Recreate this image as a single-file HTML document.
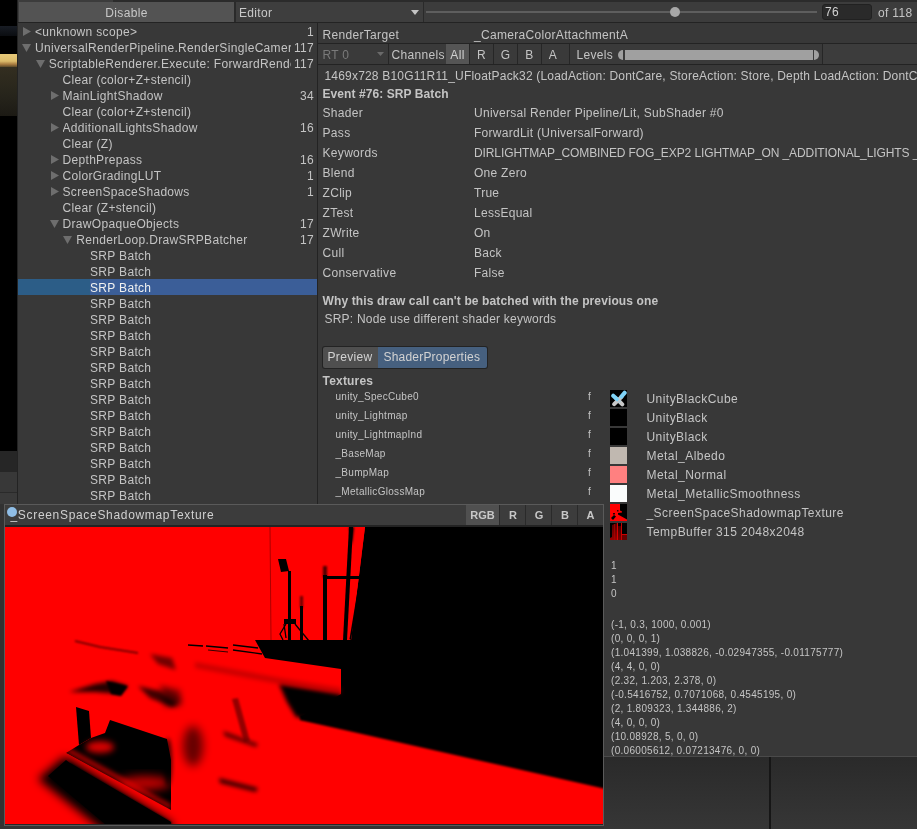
<!DOCTYPE html>
<html><head><meta charset="utf-8"><style>
*{box-sizing:border-box;margin:0;padding:0}
html,body{width:917px;height:829px;overflow:hidden;background:#2e2e2e}
body{position:relative;font-family:"Liberation Sans",sans-serif;font-size:12px;color:#c4c4c4;letter-spacing:0.32px}
.a{position:absolute}
.t{position:absolute;white-space:pre;line-height:16px}
.s{position:absolute;white-space:pre;line-height:14px;font-size:10px;letter-spacing:0.3px}
</style></head><body>
<div style="position:absolute;left:0;top:0;width:917px;height:829px;will-change:transform;overflow:hidden">
<div class="a" style="left:0px;top:0px;width:17px;height:504px;background:#000;"></div>
<div class="a" style="left:0px;top:26px;width:17px;height:10px;background:linear-gradient(#181c24,#0b0d11);"></div>
<div class="a" style="left:0px;top:54px;width:17px;height:13px;background:linear-gradient(#e6c878 0%,#dcbb6a 55%,#a5793e 80%,#5a4a2a 100%);"></div>
<div class="a" style="left:0px;top:67px;width:17px;height:49px;background:linear-gradient(#332e20,#26241b 60%,#1c1a14);"></div>
<div class="a" style="left:0px;top:451px;width:17px;height:21px;background:#262626;"></div>
<div class="a" style="left:0px;top:472px;width:17px;height:20px;background:#383838;"></div>
<div class="a" style="left:0px;top:492px;width:17px;height:1px;background:#2a2a2a;"></div>
<div class="a" style="left:0px;top:493px;width:17px;height:40px;background:#3a3a3a;"></div>
<div class="a" style="left:0px;top:504px;width:4px;height:325px;background:#323232;"></div>
<div class="a" style="left:17px;top:0px;width:300px;height:829px;background:#383838;border-left:1px solid #232323"></div>
<div class="a" style="left:18px;top:0px;width:899px;height:22px;background:#3c3c3c;"></div>
<div class="a" style="left:113px;top:0px;width:804px;height:2px;background:#2b2b2b;"></div>
<div class="a" style="left:18px;top:22px;width:899px;height:1px;background:#232323;"></div>
<div class="a" style="left:19px;top:2px;width:215px;height:20px;background:#535353;"></div>
<div class="t" style="left:19px;top:5px;width:215px;text-align:center;color:#c8c8c8">Disable</div>
<div class="a" style="left:234px;top:2px;width:2px;height:20px;background:#2a2a2a;"></div>
<div class="a" style="left:236px;top:2px;width:187px;height:20px;background:#3e3e3e;"></div>
<div class="t" style="left:239px;top:5px;color:#c8c8c8">Editor</div>
<svg class="a" style="left:411px;top:10px" width="8" height="5"><polygon points="0,0 8,0 4,5" fill="#c4c4c4"/></svg>
<div class="a" style="left:423px;top:2px;width:1px;height:20px;background:#2a2a2a;"></div>
<div class="a" style="left:426px;top:11px;width:391px;height:2px;background:#5e5e5e;"></div>
<div class="a" style="left:670px;top:7px;width:10px;height:10px;background:#a8a8a8;border-radius:50%"></div>
<div class="a" style="left:822px;top:4px;width:50px;height:16px;background:#2a2a2a;border:1px solid #212121;border-radius:3px"></div>
<div class="t" style="left:825px;top:4px;color:#d2d2d2">76</div>
<div class="t" style="left:878px;top:5px;">of 118</div>
<svg class="a" style="left:23.0px;top:27px" width="8" height="9"><polygon points="0,0 8,4.5 0,9" fill="#6e6e6e"/></svg>
<div class="t" style="left:35.0px;top:24px;width:256.0px;overflow:hidden">&lt;unknown scope&gt;</div>
<div class="t" style="left:280px;top:24px;width:34px;text-align:right">1</div>
<svg class="a" style="left:22.0px;top:44px" width="9" height="8"><polygon points="0,0 9,0 4.5,8" fill="#6e6e6e"/></svg>
<div class="t" style="left:35.0px;top:40px;width:256.0px;overflow:hidden">UniversalRenderPipeline.RenderSingleCamera</div>
<div class="t" style="left:280px;top:40px;width:34px;text-align:right">117</div>
<svg class="a" style="left:35.75px;top:60px" width="9" height="8"><polygon points="0,0 9,0 4.5,8" fill="#6e6e6e"/></svg>
<div class="t" style="left:48.75px;top:56px;width:242.25px;overflow:hidden">ScriptableRenderer.Execute: ForwardRenderer</div>
<div class="t" style="left:280px;top:56px;width:34px;text-align:right">117</div>
<div class="t" style="left:62.5px;top:72px;width:228.5px;overflow:hidden">Clear (color+Z+stencil)</div>
<svg class="a" style="left:50.5px;top:91px" width="8" height="9"><polygon points="0,0 8,4.5 0,9" fill="#6e6e6e"/></svg>
<div class="t" style="left:62.5px;top:88px;width:228.5px;overflow:hidden">MainLightShadow</div>
<div class="t" style="left:280px;top:88px;width:34px;text-align:right">34</div>
<div class="t" style="left:62.5px;top:104px;width:228.5px;overflow:hidden">Clear (color+Z+stencil)</div>
<svg class="a" style="left:50.5px;top:123px" width="8" height="9"><polygon points="0,0 8,4.5 0,9" fill="#6e6e6e"/></svg>
<div class="t" style="left:62.5px;top:120px;width:228.5px;overflow:hidden">AdditionalLightsShadow</div>
<div class="t" style="left:280px;top:120px;width:34px;text-align:right">16</div>
<div class="t" style="left:62.5px;top:136px;width:228.5px;overflow:hidden">Clear (Z)</div>
<svg class="a" style="left:50.5px;top:155px" width="8" height="9"><polygon points="0,0 8,4.5 0,9" fill="#6e6e6e"/></svg>
<div class="t" style="left:62.5px;top:152px;width:228.5px;overflow:hidden">DepthPrepass</div>
<div class="t" style="left:280px;top:152px;width:34px;text-align:right">16</div>
<svg class="a" style="left:50.5px;top:171px" width="8" height="9"><polygon points="0,0 8,4.5 0,9" fill="#6e6e6e"/></svg>
<div class="t" style="left:62.5px;top:168px;width:228.5px;overflow:hidden">ColorGradingLUT</div>
<div class="t" style="left:280px;top:168px;width:34px;text-align:right">1</div>
<svg class="a" style="left:50.5px;top:187px" width="8" height="9"><polygon points="0,0 8,4.5 0,9" fill="#6e6e6e"/></svg>
<div class="t" style="left:62.5px;top:184px;width:228.5px;overflow:hidden">ScreenSpaceShadows</div>
<div class="t" style="left:280px;top:184px;width:34px;text-align:right">1</div>
<div class="t" style="left:62.5px;top:200px;width:228.5px;overflow:hidden">Clear (Z+stencil)</div>
<svg class="a" style="left:49.5px;top:220px" width="9" height="8"><polygon points="0,0 9,0 4.5,8" fill="#6e6e6e"/></svg>
<div class="t" style="left:62.5px;top:216px;width:228.5px;overflow:hidden">DrawOpaqueObjects</div>
<div class="t" style="left:280px;top:216px;width:34px;text-align:right">17</div>
<svg class="a" style="left:63.25px;top:236px" width="9" height="8"><polygon points="0,0 9,0 4.5,8" fill="#6e6e6e"/></svg>
<div class="t" style="left:76.25px;top:232px;width:214.75px;overflow:hidden">RenderLoop.DrawSRPBatcher</div>
<div class="t" style="left:280px;top:232px;width:34px;text-align:right">17</div>
<div class="t" style="left:90.0px;top:248px;width:201.0px;overflow:hidden">SRP Batch</div>
<div class="t" style="left:90.0px;top:264px;width:201.0px;overflow:hidden">SRP Batch</div>
<div class="a" style="left:18px;top:279px;width:72px;height:16px;background:#2c5d87;"></div>
<div class="a" style="left:90px;top:279px;width:227px;height:16px;background:#3b5e98;"></div>
<div class="t" style="left:90.0px;top:280px;width:201.0px;overflow:hidden;color:#f0f0f0">SRP Batch</div>
<div class="t" style="left:90.0px;top:296px;width:201.0px;overflow:hidden">SRP Batch</div>
<div class="t" style="left:90.0px;top:312px;width:201.0px;overflow:hidden">SRP Batch</div>
<div class="t" style="left:90.0px;top:328px;width:201.0px;overflow:hidden">SRP Batch</div>
<div class="t" style="left:90.0px;top:344px;width:201.0px;overflow:hidden">SRP Batch</div>
<div class="t" style="left:90.0px;top:360px;width:201.0px;overflow:hidden">SRP Batch</div>
<div class="t" style="left:90.0px;top:376px;width:201.0px;overflow:hidden">SRP Batch</div>
<div class="t" style="left:90.0px;top:392px;width:201.0px;overflow:hidden">SRP Batch</div>
<div class="t" style="left:90.0px;top:408px;width:201.0px;overflow:hidden">SRP Batch</div>
<div class="t" style="left:90.0px;top:424px;width:201.0px;overflow:hidden">SRP Batch</div>
<div class="t" style="left:90.0px;top:440px;width:201.0px;overflow:hidden">SRP Batch</div>
<div class="t" style="left:90.0px;top:456px;width:201.0px;overflow:hidden">SRP Batch</div>
<div class="t" style="left:90.0px;top:472px;width:201.0px;overflow:hidden">SRP Batch</div>
<div class="t" style="left:90.0px;top:488px;width:201.0px;overflow:hidden">SRP Batch</div>
<div class="a" style="left:317px;top:23px;width:600px;height:734px;background:#383838;border-left:1px solid #232323"></div>
<div class="t" style="left:322.5px;top:27px;">RenderTarget</div>
<div class="t" style="left:474px;top:27px;">_CameraColorAttachmentA</div>
<div class="a" style="left:318px;top:43px;width:599px;height:1px;background:#232323;"></div>
<div class="a" style="left:318px;top:44px;width:599px;height:20px;background:#3a3a3a;"></div>
<div class="t" style="left:322.5px;top:47px;color:#7a7a7a">RT 0</div>
<svg class="a" style="left:377px;top:52px" width="7" height="4"><polygon points="0,0 7,0 3.5,4" fill="#6a6a6a"/></svg>
<div class="a" style="left:388px;top:44px;width:1px;height:20px;background:#262626;"></div>
<div class="t" style="left:391.5px;top:47px;">Channels</div>
<div class="a" style="left:446px;top:44px;width:23px;height:20px;background:#555555;"></div>
<div class="t" style="left:446px;top:47px;width:23px;text-align:center;color:#d0d0d0">All</div>
<div class="a" style="left:469px;top:44px;width:1px;height:20px;background:#262626;"></div>
<div class="a" style="left:493px;top:44px;width:1px;height:20px;background:#262626;"></div>
<div class="a" style="left:517px;top:44px;width:1px;height:20px;background:#262626;"></div>
<div class="a" style="left:541px;top:44px;width:1px;height:20px;background:#262626;"></div>
<div class="t" style="left:470px;top:47px;width:23px;text-align:center">R</div>
<div class="t" style="left:494px;top:47px;width:23px;text-align:center">G</div>
<div class="t" style="left:518px;top:47px;width:23px;text-align:center">B</div>
<div class="t" style="left:542px;top:47px;width:22px;text-align:center">A</div>
<div class="a" style="left:569px;top:44px;width:1px;height:20px;background:#262626;"></div>
<div class="t" style="left:576.5px;top:47px;">Levels</div>
<svg class="a" style="left:617px;top:50px" width="204" height="10"><path d="M6,0 L6,10 A5,5 0 0 1 6,0 Z" fill="#a0a0a0"/><rect x="8" y="0" width="188" height="10" fill="#a0a0a0"/><path d="M197,0 A5,5 0 0 1 197,10 Z" fill="#a0a0a0"/></svg>
<div class="a" style="left:822px;top:44px;width:1px;height:20px;background:#262626;"></div>
<div class="a" style="left:823px;top:44px;width:94px;height:20px;background:#3c3c3c;"></div>
<div class="a" style="left:318px;top:64px;width:599px;height:1px;background:#232323;"></div>
<div class="t" style="left:324.5px;top:68px;letter-spacing:0.19px">1469x728 B10G11R11_UFloatPack32 (LoadAction: DontCare, StoreAction: Store, Depth LoadAction: DontCare, StoreAction: DontCare)</div>
<div class="t" style="left:322.5px;top:86px;font-weight:bold;letter-spacing:0.08px">Event #76: SRP Batch</div>
<div class="t" style="left:322.5px;top:105px;">Shader</div>
<div class="t" style="left:474px;top:105px;letter-spacing:0.27px">Universal Render Pipeline/Lit, SubShader #0</div>
<div class="t" style="left:322.5px;top:125px;">Pass</div>
<div class="t" style="left:474px;top:125px;letter-spacing:0.27px">ForwardLit (UniversalForward)</div>
<div class="t" style="left:322.5px;top:145px;">Keywords</div>
<div class="t" style="left:474px;top:145px;letter-spacing:-0.1px">DIRLIGHTMAP_COMBINED FOG_EXP2 LIGHTMAP_ON _ADDITIONAL_LIGHTS _MAIN_LIGHT_SHADOWS</div>
<div class="t" style="left:322.5px;top:165px;">Blend</div>
<div class="t" style="left:474px;top:165px;letter-spacing:0.27px">One Zero</div>
<div class="t" style="left:322.5px;top:185px;">ZClip</div>
<div class="t" style="left:474px;top:185px;letter-spacing:0.27px">True</div>
<div class="t" style="left:322.5px;top:205px;">ZTest</div>
<div class="t" style="left:474px;top:205px;letter-spacing:0.27px">LessEqual</div>
<div class="t" style="left:322.5px;top:225px;">ZWrite</div>
<div class="t" style="left:474px;top:225px;letter-spacing:0.27px">On</div>
<div class="t" style="left:322.5px;top:245px;">Cull</div>
<div class="t" style="left:474px;top:245px;letter-spacing:0.27px">Back</div>
<div class="t" style="left:322.5px;top:265px;">Conservative</div>
<div class="t" style="left:474px;top:265px;letter-spacing:0.27px">False</div>
<div class="t" style="left:322.5px;top:292.5px;font-weight:bold;letter-spacing:0.12px">Why this draw call can&#x27;t be batched with the previous one</div>
<div class="t" style="left:324.5px;top:311px;letter-spacing:0.22px">SRP: Node use different shader keywords</div>
<div class="a" style="left:321.5px;top:345.5px;width:166px;height:23px;background:#232323;border-radius:3px"></div>
<div class="a" style="left:322.5px;top:346.5px;width:55px;height:21px;background:#4f4f4f;border-radius:2px 0 0 2px"></div>
<div class="a" style="left:377.5px;top:346.5px;width:109px;height:21px;background:#46607f;border-radius:0 2px 2px 0"></div>
<div class="t" style="left:327.5px;top:349px;color:#d2d2d2">Preview</div>
<div class="t" style="left:383.5px;top:349px;color:#d2d2d2;letter-spacing:0.2px">ShaderProperties</div>
<div class="t" style="left:322.5px;top:372.5px;font-weight:bold;letter-spacing:0.2px">Textures</div>
<div class="s" style="left:335.5px;top:390px;">unity_SpecCube0</div>
<div class="s" style="left:588px;top:390px;">f</div>
<div class="t" style="left:646.5px;top:390.5px;letter-spacing:0.45px">UnityBlackCube</div>
<div class="s" style="left:335.5px;top:409px;">unity_Lightmap</div>
<div class="s" style="left:588px;top:409px;">f</div>
<div class="t" style="left:646.5px;top:409.5px;letter-spacing:0.45px">UnityBlack</div>
<div class="s" style="left:335.5px;top:428px;">unity_LightmapInd</div>
<div class="s" style="left:588px;top:428px;">f</div>
<div class="t" style="left:646.5px;top:428.5px;letter-spacing:0.45px">UnityBlack</div>
<div class="s" style="left:335.5px;top:447px;">_BaseMap</div>
<div class="s" style="left:588px;top:447px;">f</div>
<div class="t" style="left:646.5px;top:447.5px;letter-spacing:0.45px">Metal_Albedo</div>
<div class="s" style="left:335.5px;top:466px;">_BumpMap</div>
<div class="s" style="left:588px;top:466px;">f</div>
<div class="t" style="left:646.5px;top:466.5px;letter-spacing:0.45px">Metal_Normal</div>
<div class="s" style="left:335.5px;top:485px;">_MetallicGlossMap</div>
<div class="s" style="left:588px;top:485px;">f</div>
<div class="t" style="left:646.5px;top:485.5px;letter-spacing:0.45px">Metal_MetallicSmoothness</div>
<div class="s" style="left:335.5px;top:504px;">_ScreenSpaceShadowmapTexture</div>
<div class="s" style="left:588px;top:504px;">f</div>
<div class="t" style="left:646.5px;top:504.5px;letter-spacing:0.45px">_ScreenSpaceShadowmapTexture</div>
<div class="s" style="left:335.5px;top:523px;">_TempBuffer</div>
<div class="s" style="left:588px;top:523px;">f</div>
<div class="t" style="left:646.5px;top:523.5px;letter-spacing:0.45px">TempBuffer 315 2048x2048</div>
<svg class="a" style="left:610px;top:390px" width="17" height="17"><rect width="17" height="17" fill="#000"/><line x1="9" y1="11" x2="12.3" y2="14.3" stroke="#c8c8c8" stroke-width="4" stroke-linecap="round"/><line x1="3.2" y1="5.8" x2="8.5" y2="10.5" stroke="#7fd3f7" stroke-width="4.2" stroke-linecap="round"/><line x1="4.2" y1="14.2" x2="11.5" y2="6.8" stroke="#c8c8c8" stroke-width="4" stroke-linecap="round"/><line x1="11.5" y1="6.5" x2="14.6" y2="2.8" stroke="#7fd3f7" stroke-width="4.2" stroke-linecap="round"/><line x1="5" y1="7.5" x2="8.3" y2="10.5" stroke="#7fd3f7" stroke-width="3.5" stroke-linecap="butt"/></svg>
<div class="a" style="left:610px;top:409px;width:17px;height:17px;background:#000;"></div>
<div class="a" style="left:610px;top:428px;width:17px;height:17px;background:#000;"></div>
<div class="a" style="left:610px;top:447px;width:17px;height:17px;background:#c0b8b0;"></div>
<div class="a" style="left:610px;top:466px;width:17px;height:17px;background:#ff8080;"></div>
<div class="a" style="left:610px;top:485px;width:17px;height:17px;background:#fafcfc;"></div>
<svg class="a" style="left:610px;top:504px" width="17" height="17"><rect width="17" height="17" fill="#f00"/><polygon points="10,0 17,0 17,15.5 8,10.5 8,9 12,8.5 12,7.5 10,6.5" fill="#000"/><polygon points="1,14 4,11 6,12.5 3,16" fill="#000"/><rect x="3" y="9" width="2" height="1.5" fill="#200"/><rect x="7" y="6" width="1.5" height="1.5" fill="#300"/></svg>
<svg class="a" style="left:610px;top:523px" width="17" height="17"><defs><linearGradient id="tg" x1="0" y1="0" x2="0" y2="1"><stop offset="0" stop-color="#500"/><stop offset="1" stop-color="#900"/></linearGradient></defs><rect width="17" height="17" fill="#000"/><polygon points="2,2 7,0 7,17 0,17 0,15 2,14" fill="url(#tg)"/><rect x="8" y="3" width="3" height="14" fill="url(#tg)" opacity="0.8"/><rect x="11" y="12" width="6" height="5" fill="#600"/><rect x="7" y="0" width="1" height="17" fill="#d00"/><rect x="11" y="0" width="1" height="17" fill="#c00"/><rect x="11" y="11" width="6" height="1" fill="#c00"/><rect x="4" y="1" width="0.8" height="16" fill="#a00"/></svg>
<div class="s" style="left:611px;top:559px;">1</div>
<div class="s" style="left:611px;top:573px;">1</div>
<div class="s" style="left:611px;top:587px;">0</div>
<div class="s" style="left:611px;top:618px;">(-1, 0.3, 1000, 0.001)</div>
<div class="s" style="left:611px;top:632px;">(0, 0, 0, 1)</div>
<div class="s" style="left:611px;top:646px;">(1.041399, 1.038826, -0.02947355, -0.01175777)</div>
<div class="s" style="left:611px;top:660px;">(4, 4, 0, 0)</div>
<div class="s" style="left:611px;top:674px;">(2.32, 1.203, 2.378, 0)</div>
<div class="s" style="left:611px;top:688px;">(-0.5416752, 0.7071068, 0.4545195, 0)</div>
<div class="s" style="left:611px;top:702px;">(2, 1.809323, 1.344886, 2)</div>
<div class="s" style="left:611px;top:716px;">(4, 0, 0, 0)</div>
<div class="s" style="left:611px;top:730px;">(10.08928, 5, 0, 0)</div>
<div class="s" style="left:611px;top:744px;">(0.06005612, 0.07213476, 0, 0)</div>
<div class="a" style="left:604px;top:756px;width:313px;height:1px;background:#4a4a4a;"></div>
<div class="a" style="left:604px;top:757px;width:313px;height:72px;background:linear-gradient(#2a2a2a,#363636);"></div>
<div class="a" style="left:769px;top:757px;width:2px;height:72px;background:#161616;"></div>
<div class="a" style="left:4px;top:504px;width:600px;height:322px;background:#3c3c3c;border:1px solid #5a5a5a"></div>
<div class="a" style="left:5px;top:525px;width:598px;height:2px;background:#232323;"></div>
<div class="a" style="left:5px;top:824px;width:598px;height:1px;background:#262626;"></div>
<div class="a" style="left:0px;top:826px;width:604px;height:3px;background:#333333;"></div>
<div class="a" style="left:7px;top:507px;width:10px;height:10px;background:#90bee6;border-radius:50%"></div>
<div class="t" style="left:10.5px;top:507px;letter-spacing:0.68px;color:#d0d0d0">_ScreenSpaceShadowmapTexture</div>
<div class="a" style="left:466px;top:505px;width:33px;height:20px;background:#505050;"></div>
<div class="t" style="left:466px;top:507px;width:33px;text-align:center;font-weight:bold;font-size:11px;letter-spacing:0;color:#c8c8c8">RGB</div>
<div class="a" style="left:499px;top:505px;width:1px;height:20px;background:#2a2a2a;"></div>
<div class="t" style="left:500px;top:507px;width:26px;text-align:center;font-weight:bold;font-size:11px;letter-spacing:0;color:#c8c8c8">R</div>
<div class="a" style="left:525px;top:505px;width:1px;height:20px;background:#2a2a2a;"></div>
<div class="t" style="left:526px;top:507px;width:26px;text-align:center;font-weight:bold;font-size:11px;letter-spacing:0;color:#c8c8c8">G</div>
<div class="a" style="left:551px;top:505px;width:1px;height:20px;background:#2a2a2a;"></div>
<div class="t" style="left:552px;top:507px;width:26px;text-align:center;font-weight:bold;font-size:11px;letter-spacing:0;color:#c8c8c8">B</div>
<div class="a" style="left:577px;top:505px;width:1px;height:20px;background:#2a2a2a;"></div>
<div class="t" style="left:578px;top:507px;width:25px;text-align:center;font-weight:bold;font-size:11px;letter-spacing:0;color:#c8c8c8">A</div>
<svg class="a" style="left:5px;top:527px" width="598" height="297" viewBox="5 527 598 297">
<defs>
<filter id="b1" x="-50%" y="-50%" width="200%" height="200%"><feGaussianBlur stdDeviation="1.2"/></filter>
<filter id="b2" x="-50%" y="-50%" width="200%" height="200%"><feGaussianBlur stdDeviation="2"/></filter>
<filter id="b3" x="-50%" y="-50%" width="200%" height="200%"><feGaussianBlur stdDeviation="3"/></filter>
<filter id="b5" x="-50%" y="-50%" width="200%" height="200%"><feGaussianBlur stdDeviation="5"/></filter>
<clipPath id="cl"><rect x="5" y="527" width="598" height="298"/></clipPath>
</defs>
<g clip-path="url(#cl)">
<rect x="5" y="527" width="598" height="298" fill="#ff0000"/>
<!-- big black: wall + floor shadow -->
<polygon points="351,640 365,527 610,527 610,787 300,717 341,694 341,669 265,658 255,640" fill="#000"/>
<polygon points="279,684 341,694 345,725 296,717 287,702" fill="#000" filter="url(#b2)"/>
<polygon points="610,784 300,714 300,720 610,790" fill="#000" filter="url(#b1)"/>
<!-- red stripe on wall edge & posts -->
<polygon points="353,527 365,527 351,640 347,640" fill="#f00"/>
<polygon points="349,527 353,527 347,640 343,640" fill="#000"/>
<polygon points="349,527 354,527 352,545" fill="#000" filter="url(#b1)"/>
<polygon points="358,588 359.5,589 351,640 349.5,639" fill="#000"/>
<rect x="324" y="576" width="35" height="3" fill="#000"/>
<rect x="323" y="575" width="4" height="67" fill="#000"/>
<rect x="323" y="566" width="4" height="12" fill="#000" filter="url(#b1)" opacity="0.7"/>
<rect x="300" y="606" width="3" height="36" fill="#000"/>
<rect x="300" y="596" width="3" height="12" fill="#000" filter="url(#b1)" opacity="0.6"/>
<rect x="288" y="571" width="3" height="71" fill="#000"/>
<polygon points="278,559 286,559 289,571 281,572" fill="#000"/>
<rect x="284" y="619" width="12" height="5" fill="#000"/>
<polyline points="286,624 280,634 283,640" stroke="#000" stroke-width="1.3" fill="none"/>
<polyline points="284,624 286,638" stroke="#000" stroke-width="1.3" fill="none"/>
<polyline points="295,624 309,641" stroke="#000" stroke-width="1.3" fill="none"/>
<line x1="270" y1="527" x2="271" y2="640" stroke="#800" stroke-width="0.7"/>

<!-- dashes on table top -->
<line x1="188" y1="645" x2="203" y2="646" stroke="#000" stroke-width="1.3"/>
<line x1="206" y1="646" x2="228" y2="648" stroke="#000" stroke-width="1.3"/>
<line x1="233" y1="645" x2="258" y2="648" stroke="#000" stroke-width="1.6"/>
<line x1="233" y1="650" x2="262" y2="654" stroke="#000" stroke-width="1.3"/>
<line x1="208" y1="650" x2="228" y2="652" stroke="#300" stroke-width="1"/>
<!-- bench bar shading (lower half darker) -->
<polygon points="195,668 279,684 341,694 341,688 280,678 195,662" fill="#900" filter="url(#b2)" opacity="0.5"/>
<!-- top arc -->
<polyline points="75,641 100,647 138,653" stroke="#500" stroke-width="1.5" fill="none" filter="url(#b1)"/>
<!-- table-top dark smears -->
<polygon points="69,692 95,684 112,681 128,686 120,694 95,692" fill="#000" filter="url(#b2)" opacity="0.85"/>
<polygon points="106,681 128,686 121,696 111,694" fill="#000" filter="url(#b1)"/>
<polygon points="138,686 160,691 177,704 172,707 150,698" fill="#000" filter="url(#b2)" opacity="0.75"/>
<polygon points="150,654 172,658 176,670 158,664" fill="#000" filter="url(#b2)" opacity="0.55"/>
<polygon points="160,686 180,700 175,707" fill="#000" filter="url(#b3)" opacity="0.5"/>
<!-- table leg & under table -->
<polygon points="76,707 89,711 91,738 79,745" fill="#000"/>
<polygon points="91,738 105,733 110,720 167,739 171,760 171,812 66,753 79,745" fill="#000"/>
<ellipse cx="100" cy="747" rx="14" ry="6" fill="#f00" filter="url(#b3)" opacity="0.85"/>
<ellipse cx="145" cy="783" rx="26" ry="7" fill="#f00" filter="url(#b5)" opacity="0.75"/>
<!-- bench base red stripe -->
<polygon points="66,753 171,810 171,822 70,763" fill="#f00"/>
<polygon points="66,753 171,810 171,804 70,748" fill="#f00" filter="url(#b2)" opacity="0.6"/>
<!-- shadow band below stripe -->
<polygon points="68,758 171,822 175,832 105,832 38,779 64,757" fill="#000" filter="url(#b5)"/>
<polygon points="70,763 171,822 171,830 120,830 60,775" fill="#000" filter="url(#b1)"/>
<polygon points="70,763 171,822 171,830 112,830 48,776 66,760" fill="#000"/>
<!-- right-side smears -->
<ellipse cx="193" cy="746" rx="10" ry="20" fill="#000" filter="url(#b5)" opacity="0.6"/>
<ellipse cx="168" cy="762" rx="4" ry="24" fill="#000" filter="url(#b2)" opacity="0.7"/>
<polygon points="223,731 258,744 256,747 225,736" fill="#000" filter="url(#b2)" opacity="0.7"/>
<polygon points="219,778 258,788 256,792 220,783" fill="#000" filter="url(#b2)" opacity="0.8"/>
<polygon points="232,699 238,698 250,741 244,742" fill="#600" filter="url(#b1)" opacity="0.7"/>
<polygon points="160,686 180,690 182,705 165,707" fill="#000" filter="url(#b3)" opacity="0.5"/>
</g>
</svg>
</div></body></html>
